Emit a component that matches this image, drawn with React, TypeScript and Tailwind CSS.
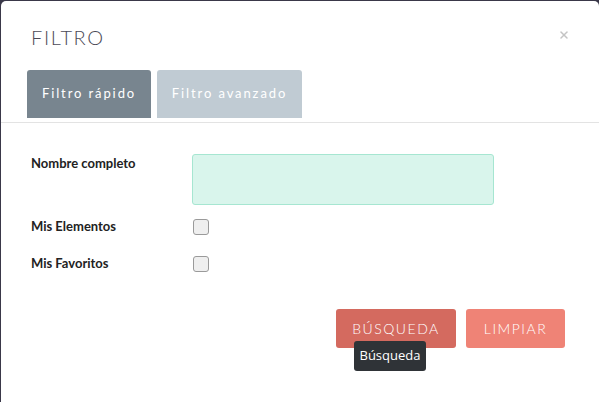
import { X } from 'lucide-react';

export default function App() {
  return (
    <div className="w-[599px] h-[402px] bg-[#3a3849] pt-px pl-px overflow-hidden" style={{ fontFamily: 'Lato, "Open Sans", sans-serif' }}>
      <div className="w-[598px] h-[420px] bg-white rounded-[5px] relative">
        {/* Header */}
        <div className="flex items-start justify-between pl-[30px] pr-[29px] pt-[24px]">
          <h1 className="text-[20px] font-light tracking-[1.6px] text-[#4b4a57] leading-[24px]">FILTRO</h1>
          <button className="text-[#c4c4c4] mt-[4px]">
            <X size={12} strokeWidth={3} />
          </button>
        </div>

        {/* Tabs */}
        <div className="flex gap-[6px] pl-[26px] mt-[21px] border-b border-[#e3e3e3] pb-[4px]">
          <div className="w-[124px] h-[48px] bg-[#78858f] rounded-t-[3px] flex items-center justify-center text-white text-[13px] tracking-[1.9px]">
            Filtro rápido
          </div>
          <div className="w-[145px] h-[48px] bg-[#c0cbd3] rounded-t-[3px] flex items-center justify-center text-white text-[13px] tracking-[1.9px]">
            Filtro avanzado
          </div>
        </div>

        {/* Form */}
        <div className="pl-[30px] pt-[31px] flex flex-col">
          <div className="flex">
            <label className="w-[161px] text-[13px] font-bold text-[#222] pt-[1px] leading-[16px]">Nombre completo</label>
            <div className="w-[302px] h-[51px] bg-[#d9f5ec] border border-[#a6e6d1] rounded-[3px]"></div>
          </div>
          <div className="flex items-center mt-[13px] h-[18px]">
            <label className="w-[162px] text-[13px] font-bold text-[#222]">Mis Elementos</label>
            <div className="w-[16px] h-[16px] bg-[#efefef] border border-[#9a9a9a] rounded-[3px]"></div>
          </div>
          <div className="flex items-center mt-[19px] h-[18px]">
            <label className="w-[162px] text-[13px] font-bold text-[#222]">Mis Favoritos</label>
            <div className="w-[16px] h-[16px] bg-[#efefef] border border-[#9a9a9a] rounded-[3px]"></div>
          </div>
        </div>

        {/* Buttons */}
        <div className="flex justify-end gap-[10px] pr-[34px] mt-[36px]">
          <div className="relative">
            <button className="w-[120px] h-[39px] bg-[#d46a5f] rounded-[3px] text-white text-[14px] font-light tracking-[1.5px]">
              BÚSQUEDA
            </button>
            <div className="absolute left-[18px] top-[32px] w-[72px] h-[30px] bg-[#2f3337] rounded-[3px] flex items-center justify-center text-white text-[13px]" style={{ fontFamily: '"Open Sans", sans-serif' }}>
              Búsqueda
            </div>
          </div>
          <button className="w-[99px] h-[39px] bg-[#ef8376] rounded-[3px] text-white text-[14px] font-light tracking-[1.5px]">
            LIMPIAR
          </button>
        </div>
      </div>
    </div>
  );
}
